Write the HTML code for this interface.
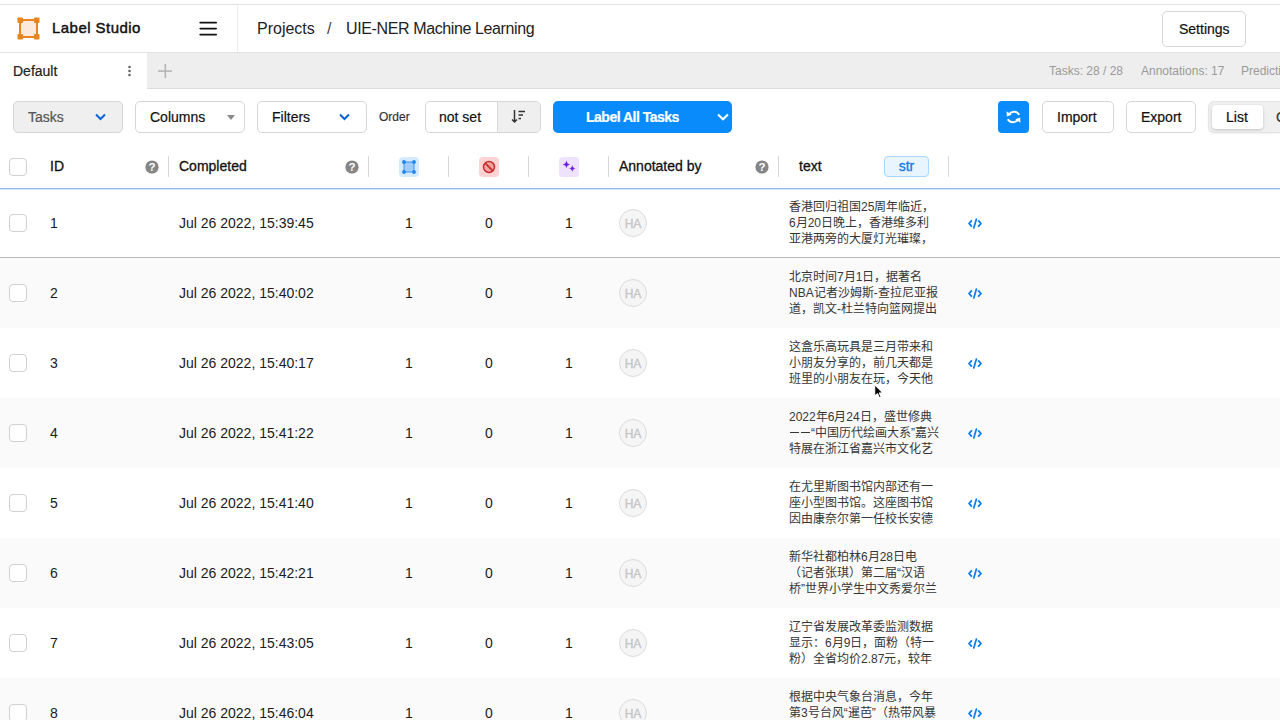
<!DOCTYPE html>
<html lang="zh-CN"><head><meta charset="utf-8">
<style>
*{box-sizing:border-box;margin:0;padding:0}
html,body{width:1280px;height:720px;overflow:hidden;background:#fff}
body{font-family:"Liberation Sans",sans-serif;color:#000;position:relative}
.abs{position:absolute}
.topline{position:absolute;left:0;top:4px;width:1280px;height:1px;background:#e2e2e2}
.hdrbot{position:absolute;left:0;top:52px;width:1280px;height:1px;background:#e2e2e2}
.vdiv{position:absolute;left:237px;top:5px;width:1px;height:47px;background:#ebebeb}
.brand{position:absolute;left:52px;top:19px;font-size:15px;line-height:18px;letter-spacing:0.45px;-webkit-text-stroke:0.45px #111;color:#111;white-space:nowrap}
.crumbs{position:absolute;top:19px;font-size:16px;line-height:19px;color:#222;white-space:nowrap}
.btn{position:absolute;border:1px solid #d6d6d6;border-radius:5px;background:#fff;font-size:14px;color:#111;white-space:nowrap}
.bt{position:absolute;font-size:14px;line-height:16px;color:#111;white-space:nowrap;-webkit-text-stroke:0.2px currentColor}
.tabbar{position:absolute;left:0;top:53px;width:1280px;height:35px;background:#eeeeee}
.tabbot{position:absolute;left:147px;top:88px;width:1133px;height:1px;background:#dcdcdc}
.tab{position:absolute;left:0;top:53px;width:147px;height:36px;background:#fff}
.stats{position:absolute;top:64px;font-size:12px;line-height:14px;color:#9a9a9a;white-space:nowrap}
.hline{position:absolute;left:0;top:188px;width:1280px;height:2px;background:#98b8ec;border-bottom:1px solid #d6e8ff;z-index:5}
.th{position:absolute;top:158px;font-size:14px;line-height:16px;color:#111;white-space:nowrap;-webkit-text-stroke:0.3px #111}
.coldiv{position:absolute;top:156px;width:1px;height:21px;background:#d8d8d8}
.q{position:absolute;top:160px;width:14px;height:14px}
.row{position:absolute;left:0;width:1280px;height:70px}
.cb{position:absolute;left:9px;width:18px;height:18px;border:1px solid #d0d0d0;border-radius:4px;background:#fff}
.cell{position:absolute;top:27px;font-size:14px;line-height:16px;color:#1a1a1a;white-space:nowrap}
.num{width:80px;text-align:center}
.av{position:absolute;left:619px;top:21px;width:28px;height:28px;border-radius:50%;border:1px solid #dcdcdc;background:#f5f5f5;color:#c6c6c6;font-size:12px;-webkit-text-stroke:0.3px #c2c2c2;text-align:center;line-height:28px}
.txt{position:absolute;left:789px;top:11px;width:160px;font-size:12px;line-height:16px;color:#363636;white-space:nowrap;overflow:hidden;text-spacing-trim:space-all}
.code{position:absolute;left:967px;top:30px}
</style></head><body>
<div class="topline"></div>
<div class="hdrbot"></div>
<div class="vdiv"></div>
<!-- logo -->
<svg class="abs" style="left:17px;top:17px" width="23" height="23" viewBox="0 0 23 23">
<rect x="3" y="3" width="17" height="17" fill="#fde8dc" stroke="#e8851f" stroke-width="2"/>
<rect x="0.5" y="0.5" width="5.5" height="5.5" rx="0.8" fill="#e8851f"/>
<rect x="17" y="0.5" width="5.5" height="5.5" rx="0.8" fill="#e8851f"/>
<rect x="0.5" y="17" width="5.5" height="5.5" rx="0.8" fill="#e8851f"/>
<rect x="17" y="17" width="5.5" height="5.5" rx="0.8" fill="#e8851f"/>
</svg>
<div class="brand">Label Studio</div>
<svg class="abs" style="left:199px;top:21px" width="19" height="15" viewBox="0 0 19 15">
<rect x="0.4" y="0.75" width="17.6" height="1.75" rx="0.8" fill="#111"/><rect x="0.4" y="6.65" width="17.6" height="1.75" rx="0.8" fill="#111"/><rect x="0.4" y="12.75" width="17.6" height="1.75" rx="0.8" fill="#111"/>
</svg>
<div class="crumbs" style="left:257px">Projects</div>
<div class="crumbs" style="left:327px;color:#444">/</div>
<div class="crumbs" style="left:346px;letter-spacing:-0.38px">UIE-NER Machine Learning</div>
<div class="btn" style="left:1162px;top:11px;width:84px;height:36px"></div>
<div class="bt" style="left:1179px;top:21px;-webkit-text-stroke:0.2px #111">Settings</div>

<!-- tab bar -->
<div class="tabbar"></div>
<div class="tabbot"></div>
<div class="tab"></div>
<div class="bt" style="left:13px;top:63px;color:#222">Default</div>
<svg class="abs" style="left:127px;top:65px" width="5" height="12"><circle cx="2.5" cy="2" r="1.3" fill="#666"/><circle cx="2.5" cy="6" r="1.3" fill="#666"/><circle cx="2.5" cy="10" r="1.3" fill="#666"/></svg>
<svg class="abs" style="left:158px;top:64px" width="15" height="15"><rect x="6.5" y="0" width="1.6" height="14" fill="#b5b5b5"/><rect x="0" y="6.3" width="14" height="1.6" fill="#b5b5b5"/></svg>
<div class="stats" style="left:1049px">Tasks: 28 / 28</div>
<div class="stats" style="left:1141px">Annotations: 17</div>
<div class="stats" style="left:1241px">Predictions: 28</div>

<!-- toolbar -->
<div class="btn" style="left:13px;top:101px;width:110px;height:32px;background:#efefef"></div>
<div class="bt" style="left:28px;top:109px;color:#555">Tasks</div>
<svg class="abs" style="left:95px;top:113px" width="11" height="8"><path d="M1 1.5 L5.5 6 L10 1.5" fill="none" stroke="#0b62d6" stroke-width="2"/></svg>
<div class="btn" style="left:135px;top:101px;width:110px;height:32px"></div>
<div class="bt" style="left:150px;top:109px">Columns</div>
<svg class="abs" style="left:227px;top:115px" width="9" height="6"><path d="M0 0 L8 0 L4 5 Z" fill="#8a8a8a"/></svg>
<div class="btn" style="left:257px;top:101px;width:110px;height:32px"></div>
<div class="bt" style="left:272px;top:109px">Filters</div>
<svg class="abs" style="left:339px;top:113px" width="11" height="8"><path d="M1 1.5 L5.5 6 L10 1.5" fill="none" stroke="#0b62d6" stroke-width="2"/></svg>
<div class="bt" style="left:379px;top:110px;font-size:12px;line-height:14px;color:#333">Order</div>
<div class="btn" style="left:425px;top:101px;width:116px;height:32px;overflow:hidden"><div style="position:absolute;left:71px;top:0;width:45px;height:32px;background:#efefef;border-left:1px solid #d6d6d6"></div></div>
<div class="bt" style="left:439px;top:109px">not set</div>
<svg class="abs" style="left:511px;top:109px" width="16" height="16" viewBox="0 0 16 16"><path d="M3.5 1 V13 M1 10.5 L3.5 13 L6 10.5" fill="none" stroke="#333" stroke-width="1.5"/><path d="M7.5 2.5 H14 M7.5 6 H12 M7.5 9.5 H10" fill="none" stroke="#333" stroke-width="1.5"/></svg>
<div class="abs" style="left:553px;top:101px;width:179px;height:32px;background:#0a8bfb;border-radius:5px"></div>
<div class="bt" style="left:586px;top:109px;color:#fff;font-weight:bold;letter-spacing:-0.5px">Label All Tasks</div>
<svg class="abs" style="left:717px;top:113px" width="12" height="8"><path d="M1 1.5 L6 6.2 L11 1.5" fill="none" stroke="#fff" stroke-width="2.2"/></svg>
<div class="abs" style="left:998px;top:101px;width:31px;height:32px;background:#0a8bfb;border-radius:4px"></div>
<svg class="abs" style="left:1005px;top:108px" width="17" height="18" viewBox="0 0 17 18"><path d="M14.2 6.8 A6 6 0 0 0 4.2 6.2" fill="none" stroke="#fff" stroke-width="2"/><path d="M1.6 3.2 L6.6 6.8 L1.8 8.4 Z" fill="#fff"/><path d="M2.8 11.2 A6 6 0 0 0 12.8 11.8" fill="none" stroke="#fff" stroke-width="2"/><path d="M15.4 14.8 L10.4 11.2 L15.2 9.6 Z" fill="#fff"/></svg>
<div class="btn" style="left:1042px;top:101px;width:72px;height:32px"></div>
<div class="bt" style="left:1057px;top:109px">Import</div>
<div class="btn" style="left:1126px;top:101px;width:70px;height:32px"></div>
<div class="bt" style="left:1141px;top:109px">Export</div>
<div class="abs" style="left:1208px;top:101px;width:90px;height:32px;background:#f0f0f0;border-radius:6px;box-shadow:inset 0 0 0 1px #e4e4e4, 0 1px 2px rgba(0,0,0,0.06)"></div>
<div class="abs" style="left:1212px;top:105px;width:51px;height:24px;background:#fff;border-radius:4px;box-shadow:0 1px 3px rgba(0,0,0,0.2)"></div>
<div class="bt" style="left:1226px;top:109px">List</div>
<div class="bt" style="left:1276px;top:109px;color:#333">Grid</div>

<!-- table header -->
<div class="cb" style="top:158px"></div>
<div class="th" style="left:50px">ID</div>
<svg class="q" style="left:145px" viewBox="0 0 14 14"><circle cx="7" cy="7" r="6.6" fill="#858585"/><text x="7" y="11" text-anchor="middle" font-family="Liberation Sans" font-weight="bold" font-size="11.5" fill="#fff">?</text></svg>
<div class="coldiv" style="left:168px"></div>
<div class="th" style="left:179px">Completed</div>
<svg class="q" style="left:345px" viewBox="0 0 14 14"><circle cx="7" cy="7" r="6.6" fill="#858585"/><text x="7" y="11" text-anchor="middle" font-family="Liberation Sans" font-weight="bold" font-size="11.5" fill="#fff">?</text></svg>
<div class="coldiv" style="left:368px"></div>
<svg class="abs" style="left:399px;top:157px" width="20" height="20" viewBox="0 0 20 20"><rect width="20" height="20" rx="4" fill="#d5eaff"/><rect x="5" y="5" width="10" height="10" fill="#9fcdfb" stroke="#3a93ee" stroke-width="1"/><circle cx="5" cy="5" r="1.9" fill="#1f86ec"/><circle cx="15" cy="5" r="1.9" fill="#1f86ec"/><circle cx="5" cy="15" r="1.9" fill="#1f86ec"/><circle cx="15" cy="15" r="1.9" fill="#1f86ec"/></svg>
<div class="coldiv" style="left:448px"></div>
<svg class="abs" style="left:479px;top:157px" width="20" height="20" viewBox="0 0 20 20"><rect width="20" height="20" rx="4" fill="#ffd3d3"/><circle cx="10" cy="10" r="5.5" fill="#f2a3a3" stroke="#c62f2f" stroke-width="1.5"/><path d="M6.2 6.2 L13.8 13.8" stroke="#c62f2f" stroke-width="1.8"/></svg>
<div class="coldiv" style="left:528px"></div>
<svg class="abs" style="left:559px;top:157px" width="20" height="20" viewBox="0 0 20 20"><rect width="20" height="20" rx="3.5" fill="#eee2ff"/><path d="M7.4 3.6 Q7.9 7.1 11.2 7.5 Q7.9 7.9 7.4 11.4 Q6.9 7.9 3.6 7.5 Q6.9 7.1 7.4 3.6 Z" fill="#6f22e6"/><path d="M13.3 7.9 Q13.8 11 16.8 11.4 Q13.8 11.8 13.3 14.9 Q12.8 11.8 9.8 11.4 Q12.8 11 13.3 7.9 Z" fill="#6f22e6"/></svg>
<div class="coldiv" style="left:608px"></div>
<div class="th" style="left:619px">Annotated by</div>
<svg class="q" style="left:755px" viewBox="0 0 14 14"><circle cx="7" cy="7" r="6.6" fill="#858585"/><text x="7" y="11" text-anchor="middle" font-family="Liberation Sans" font-weight="bold" font-size="11.5" fill="#fff">?</text></svg>
<div class="coldiv" style="left:778px"></div>
<div class="th" style="left:799px">text</div>
<div class="abs" style="left:884px;top:156px;width:45px;height:21px;border:1px solid #a9d6ff;border-radius:4px;background:#e8f5ff;color:#1479e0;font-size:14px;line-height:19px;text-align:center;-webkit-text-stroke:0.3px #1479e0">str</div>
<div class="coldiv" style="left:948px"></div>
<div class="hline"></div>

<div class="row" style="top:188px;background:#fff">
<div class="cb" style="top:26px"></div>
<div class="cell" style="left:50px">1</div>
<div class="cell" style="left:179px">Jul 26 2022, 15:39:45</div>
<div class="cell num" style="left:369px">1</div>
<div class="cell num" style="left:449px">0</div>
<div class="cell num" style="left:529px">1</div>
<div class="av">HA</div>
<div class="txt">香港回归祖国25周年临近，<br>6月20日晚上，香港维多利<br>亚港两旁的大厦灯光璀璨，</div>
<svg class="code" width="16" height="11" viewBox="0 0 16 11"><path d="M4.4 2.9 L2 5.5 L4.4 8.1 M11.6 2.9 L14 5.5 L11.6 8.1" fill="none" stroke="#0a7cf0" stroke-width="1.8" stroke-linecap="round" stroke-linejoin="round"/><path d="M9.4 1 L6.8 10" fill="none" stroke="#0a7cf0" stroke-width="1.7" stroke-linecap="round"/></svg>
</div>
<div class="row" style="top:258px;background:#fafafa">
<div class="cb" style="top:26px"></div>
<div class="cell" style="left:50px">2</div>
<div class="cell" style="left:179px">Jul 26 2022, 15:40:02</div>
<div class="cell num" style="left:369px">1</div>
<div class="cell num" style="left:449px">0</div>
<div class="cell num" style="left:529px">1</div>
<div class="av">HA</div>
<div class="txt">北京时间7月1日，据著名<br>NBA记者沙姆斯-查拉尼亚报<br>道，凯文-杜兰特向篮网提出</div>
<svg class="code" width="16" height="11" viewBox="0 0 16 11"><path d="M4.4 2.9 L2 5.5 L4.4 8.1 M11.6 2.9 L14 5.5 L11.6 8.1" fill="none" stroke="#0a7cf0" stroke-width="1.8" stroke-linecap="round" stroke-linejoin="round"/><path d="M9.4 1 L6.8 10" fill="none" stroke="#0a7cf0" stroke-width="1.7" stroke-linecap="round"/></svg>
</div>
<div class="row" style="top:328px;background:#fff">
<div class="cb" style="top:26px"></div>
<div class="cell" style="left:50px">3</div>
<div class="cell" style="left:179px">Jul 26 2022, 15:40:17</div>
<div class="cell num" style="left:369px">1</div>
<div class="cell num" style="left:449px">0</div>
<div class="cell num" style="left:529px">1</div>
<div class="av">HA</div>
<div class="txt">这盒乐高玩具是三月带来和<br>小朋友分享的，前几天都是<br>班里的小朋友在玩，今天他</div>
<svg class="code" width="16" height="11" viewBox="0 0 16 11"><path d="M4.4 2.9 L2 5.5 L4.4 8.1 M11.6 2.9 L14 5.5 L11.6 8.1" fill="none" stroke="#0a7cf0" stroke-width="1.8" stroke-linecap="round" stroke-linejoin="round"/><path d="M9.4 1 L6.8 10" fill="none" stroke="#0a7cf0" stroke-width="1.7" stroke-linecap="round"/></svg>
</div>
<div class="row" style="top:398px;background:#fafafa">
<div class="cb" style="top:26px"></div>
<div class="cell" style="left:50px">4</div>
<div class="cell" style="left:179px">Jul 26 2022, 15:41:22</div>
<div class="cell num" style="left:369px">1</div>
<div class="cell num" style="left:449px">0</div>
<div class="cell num" style="left:529px">1</div>
<div class="av">HA</div>
<div class="txt">2022年6月24日，盛世修典<br><span style="display:inline-block;width:9px;height:1px;background:#363636;vertical-align:4px;margin:0 1px 0 1px"></span><span style="display:inline-block;width:9px;height:1px;background:#363636;vertical-align:4px;margin:0 1px 0 1px"></span>“中国历代绘画大系”嘉兴<br>特展在浙江省嘉兴市文化艺</div>
<svg class="code" width="16" height="11" viewBox="0 0 16 11"><path d="M4.4 2.9 L2 5.5 L4.4 8.1 M11.6 2.9 L14 5.5 L11.6 8.1" fill="none" stroke="#0a7cf0" stroke-width="1.8" stroke-linecap="round" stroke-linejoin="round"/><path d="M9.4 1 L6.8 10" fill="none" stroke="#0a7cf0" stroke-width="1.7" stroke-linecap="round"/></svg>
</div>
<div class="row" style="top:468px;background:#fff">
<div class="cb" style="top:26px"></div>
<div class="cell" style="left:50px">5</div>
<div class="cell" style="left:179px">Jul 26 2022, 15:41:40</div>
<div class="cell num" style="left:369px">1</div>
<div class="cell num" style="left:449px">0</div>
<div class="cell num" style="left:529px">1</div>
<div class="av">HA</div>
<div class="txt">在尤里斯图书馆内部还有一<br>座小型图书馆。这座图书馆<br>因由康奈尔第一任校长安德</div>
<svg class="code" width="16" height="11" viewBox="0 0 16 11"><path d="M4.4 2.9 L2 5.5 L4.4 8.1 M11.6 2.9 L14 5.5 L11.6 8.1" fill="none" stroke="#0a7cf0" stroke-width="1.8" stroke-linecap="round" stroke-linejoin="round"/><path d="M9.4 1 L6.8 10" fill="none" stroke="#0a7cf0" stroke-width="1.7" stroke-linecap="round"/></svg>
</div>
<div class="row" style="top:538px;background:#fafafa">
<div class="cb" style="top:26px"></div>
<div class="cell" style="left:50px">6</div>
<div class="cell" style="left:179px">Jul 26 2022, 15:42:21</div>
<div class="cell num" style="left:369px">1</div>
<div class="cell num" style="left:449px">0</div>
<div class="cell num" style="left:529px">1</div>
<div class="av">HA</div>
<div class="txt">新华社都柏林6月28日电<br>（记者张琪）第二届“汉语<br>桥”世界小学生中文秀爱尔兰</div>
<svg class="code" width="16" height="11" viewBox="0 0 16 11"><path d="M4.4 2.9 L2 5.5 L4.4 8.1 M11.6 2.9 L14 5.5 L11.6 8.1" fill="none" stroke="#0a7cf0" stroke-width="1.8" stroke-linecap="round" stroke-linejoin="round"/><path d="M9.4 1 L6.8 10" fill="none" stroke="#0a7cf0" stroke-width="1.7" stroke-linecap="round"/></svg>
</div>
<div class="row" style="top:608px;background:#fff">
<div class="cb" style="top:26px"></div>
<div class="cell" style="left:50px">7</div>
<div class="cell" style="left:179px">Jul 26 2022, 15:43:05</div>
<div class="cell num" style="left:369px">1</div>
<div class="cell num" style="left:449px">0</div>
<div class="cell num" style="left:529px">1</div>
<div class="av">HA</div>
<div class="txt">辽宁省发展改革委监测数据<br>显示：6月9日，面粉（特一<br>粉）全省均价2.87元，较年</div>
<svg class="code" width="16" height="11" viewBox="0 0 16 11"><path d="M4.4 2.9 L2 5.5 L4.4 8.1 M11.6 2.9 L14 5.5 L11.6 8.1" fill="none" stroke="#0a7cf0" stroke-width="1.8" stroke-linecap="round" stroke-linejoin="round"/><path d="M9.4 1 L6.8 10" fill="none" stroke="#0a7cf0" stroke-width="1.7" stroke-linecap="round"/></svg>
</div>
<div class="row" style="top:678px;background:#fafafa">
<div class="cb" style="top:26px"></div>
<div class="cell" style="left:50px">8</div>
<div class="cell" style="left:179px">Jul 26 2022, 15:46:04</div>
<div class="cell num" style="left:369px">1</div>
<div class="cell num" style="left:449px">0</div>
<div class="cell num" style="left:529px">1</div>
<div class="av">HA</div>
<div class="txt">根据中央气象台消息，今年<br>第3号台风“暹芭”（热带风暴<br>组织发展，为南方带来强降</div>
<svg class="code" width="16" height="11" viewBox="0 0 16 11"><path d="M4.4 2.9 L2 5.5 L4.4 8.1 M11.6 2.9 L14 5.5 L11.6 8.1" fill="none" stroke="#0a7cf0" stroke-width="1.8" stroke-linecap="round" stroke-linejoin="round"/><path d="M9.4 1 L6.8 10" fill="none" stroke="#0a7cf0" stroke-width="1.7" stroke-linecap="round"/></svg>
</div>
<div class="abs" style="left:0;top:257px;width:1280px;height:1px;background:#b9b9be;z-index:4"></div>
<svg class="abs" style="left:872.5px;top:382.5px;z-index:10" width="12" height="17" viewBox="0 0 14 20"><path d="M2 2 L2 15.5 L5.2 12.6 L7.6 17.6 L9.6 16.7 L7.3 11.8 L11.5 11.6 Z" fill="#000" stroke="#fff" stroke-width="1.2" stroke-linejoin="round"/></svg>
</body></html>
